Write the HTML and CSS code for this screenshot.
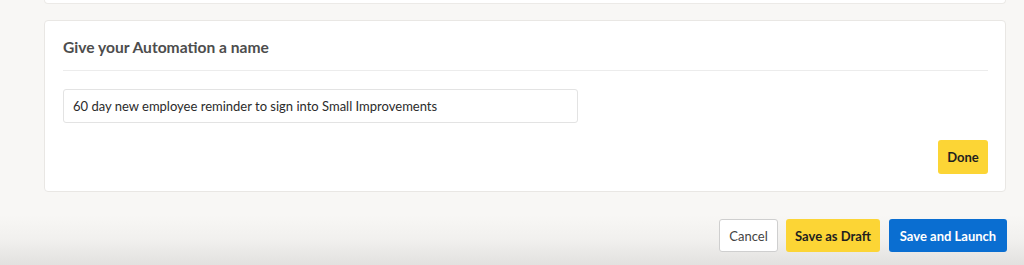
FILE: index.html
```html
<!DOCTYPE html>
<html lang="en">
<head>
    <meta charset="UTF-8">
    <meta name="viewport" content="width=device-width, initial-scale=1.0">
    <title>Automation - Name</title>
    <link rel="stylesheet" href="styles.css">
</head>
<body>
    <div class="page">
        <div class="card-prev"></div>

        <div class="card">
            <h2 class="card-title">Give your Automation a name</h2>
            <input class="name-input" type="text" value="60 day new employee reminder to sign into Small Improvements">
            <div class="card-footer">
                <button class="btn btn-yellow btn-done">Done</button>
            </div>
        </div>

        <div class="actions">
            <button class="btn btn-outline btn-cancel">Cancel</button>
            <button class="btn btn-yellow btn-draft">Save as Draft</button>
            <button class="btn btn-blue btn-launch">Save and Launch</button>
        </div>
    </div>
</body>
</html>
```

FILE: styles.css
```css
html, body {
    margin: 0;
    height: 265px;
}
body {
    font-family: Lato, "Open Sans", Arial, sans-serif;
    background: linear-gradient(to bottom, #f8f7f5 0, #f8f7f5 215px, #f1f0ee 240px, #e2e1df 265px);
    overflow: hidden;
}
.page {
    margin-left: 44px;
    width: 962px;
}
.card-prev {
    height: 3px;
    background: #fff;
    border: 1px solid #eceae7;
    border-top: none;
    border-radius: 0 0 4px 4px;
}
.card {
    margin-top: 16px;
    background: #fff;
    border: 1px solid #e9e7e4;
    border-radius: 4px;
    padding: 0 17px 17px 18px;
}
.card-title {
    margin: 0;
    padding: 16px 0 13px;
    font-size: 15.6px;
    line-height: 20px;
    font-weight: 700;
    color: #4d4d4d;
    border-bottom: 1px solid #ececec;
}
.name-input {
    display: block;
    box-sizing: border-box;
    margin-top: 18px;
    width: 515px;
    height: 34px;
    padding: 0 9px;
    font-family: inherit;
    font-size: 13px;
    color: #2b2b2b;
    border: 1px solid #e3e3e3;
    border-radius: 3px;
    outline: none;
}
.card-footer {
    display: flex;
    justify-content: flex-end;
    margin-top: 17px;
}
.actions {
    display: flex;
    justify-content: flex-end;
    margin-top: 27px;
    margin-right: -1px;
}
.btn {
    box-sizing: border-box;
    height: 34px;
    padding: 0;
    font-family: inherit;
    font-size: 13px;
    font-weight: 700;
    border: none;
    border-radius: 3px;
    cursor: pointer;
}
.actions .btn {
    height: 33px;
}
.btn-done {
    width: 50px;
}
.btn-cancel {
    width: 59px;
}
.btn-draft {
    width: 94px;
    margin-left: 8px;
}
.btn-launch {
    width: 118px;
    margin-left: 9px;
}
.btn-yellow {
    background: #fcd535;
    color: #1f1f1f;
}
.btn-blue {
    background: #0a6ed1;
    color: #fff;
}
.btn-outline {
    background: #fff;
    color: #444;
    font-weight: 400;
    border: 1px solid #cfcfcf;
}
```
